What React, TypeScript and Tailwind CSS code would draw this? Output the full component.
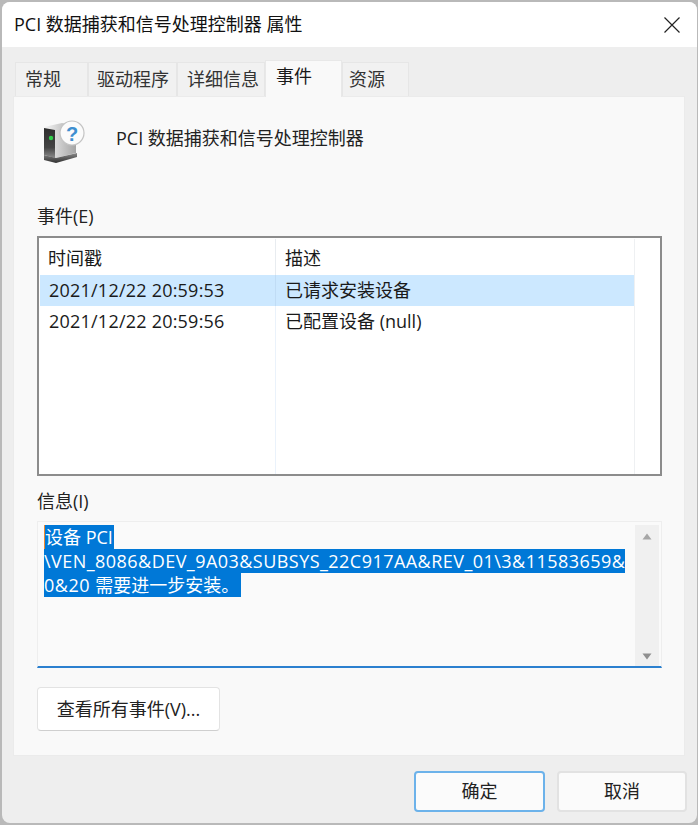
import React from "react";

const FONT = "font-['Open_Sans','Noto_Sans_CJK_SC',sans-serif]";

function DeviceIcon() {
  return (
    <svg width="44" height="48" viewBox="0 0 44 48" className="block">
      <defs>
        <linearGradient id="front" x1="0" y1="0" x2="0" y2="1">
          <stop offset="0" stopColor="#2e2e2e" />
          <stop offset="0.65" stopColor="#444" />
          <stop offset="1" stopColor="#8c8c8c" />
        </linearGradient>
        <linearGradient id="side" x1="0" y1="0" x2="1" y2="0">
          <stop offset="0" stopColor="#f6f6f6" />
          <stop offset="1" stopColor="#a4a4a4" />
        </linearGradient>
        <linearGradient id="base" x1="0" y1="0" x2="0" y2="1">
          <stop offset="0" stopColor="#8a8a8a" />
          <stop offset="1" stopColor="#303030" />
        </linearGradient>
      </defs>
      <path d="M1 7 L19 3 L33 6 L33 33 L13 38 L1 35 Z" fill="url(#side)" />
      <path d="M1 8 L12 10 L12 38 L1 35 Z" fill="url(#front)" />
      <path d="M1 35 L13 38 L34 33 L34 37 L13 43 L1 40 Z" fill="url(#base)" />
      <circle cx="8" cy="18" r="2.2" fill="#2fd04a" />
      <circle cx="29" cy="13" r="12" fill="#fbfbfb" stroke="#c4c4c4" strokeWidth="1.2" />
      <text x="29" y="20.5" textAnchor="middle" fontSize="20" fontWeight="700" fill="#3f8fd0" fontFamily="'Liberation Sans',sans-serif">?</text>
    </svg>
  );
}

function Tab({ label, w, pl, active }: { label: string; w: string; pl: string; active?: boolean }) {
  return active ? (
    <div className={`${w} ${pl} relative z-10 -mb-px h-[37px] bg-[#f9f9f9] border border-b-0 border-[#e8e8e8] pt-[3px] leading-[24px] text-[#1a1a1a]`}>
      {label}
    </div>
  ) : (
    <div className={`${w} ${pl} h-[34px] bg-[#f1f1f1] border border-b-0 border-[#e6e6e6] pt-[4px] leading-[24px] text-[#333]`}>
      {label}
    </div>
  );
}

export default function App() {
  return (
    <div className={`${FONT} h-[825px] w-[698px] overflow-hidden bg-[#b9b9b9] pl-[2px] pt-[2px] pr-[1px] pb-[2px] text-[18px] text-[#1a1a1a]`}>
      <div className="flex h-full flex-col overflow-hidden rounded-[8px] bg-[#eeeeee]">
        <div className="flex h-[45px] shrink-0 items-center justify-between bg-white pl-[12px] pr-[17px]">
          <span className="text-[#111]">PCI 数据捕获和信号处理控制器 属性</span>
          <svg width="16" height="16" viewBox="0 0 16 16">
            <path d="M0.5 0.5 L15.5 15.5 M15.5 0.5 L0.5 15.5" stroke="#222" strokeWidth="1.2" fill="none" />
          </svg>
        </div>

        <div className="flex flex-1 flex-col pl-[11px] pr-[10px] pt-[12px]">
          <div className="flex h-[37px] items-end pl-[2px]">
            <Tab label="常规" w="w-[73px]" pl="pl-[9px]" />
            <Tab label="驱动程序" w="w-[89px]" pl="pl-[8px]" />
            <Tab label="详细信息" w="w-[88px]" pl="pl-[9px]" />
            <Tab label="事件" w="w-[77px]" pl="pl-[10px]" active />
            <Tab label="资源" w="w-[67px]" pl="pl-[6px]" />
          </div>

          <div className="mr-[2px] flex h-[660px] flex-col border border-[#ebebeb] bg-[#f9f9f9] pl-[23px] pr-[22px]">
            <div className="flex h-[71px] items-start pl-[6px] pt-[23px]">
              <DeviceIcon />
              <span className="ml-[29px] mt-[6px] leading-[24px] text-[#222]">PCI 数据捕获和信号处理控制器</span>
            </div>

            <div className="mt-[36px] h-[24px] leading-[24px] text-[#222]">事件(E)</div>

            <div className="mt-[8px] h-[240px] border-2 border-[#8c8c8c] bg-white pl-px pt-px pr-[25px]">
              <div className="relative flex h-full flex-col border-r border-[#eef0f2]">
                <div className="flex h-[36px] items-center">
                  <div className="flex h-full w-[236px] items-center border-r border-[#e8ecf0] pl-[8px] pt-[2px]">时间戳</div>
                  <div className="pl-[9px] pt-[2px]">描述</div>
                </div>
                <div className="flex h-[31px] items-center bg-[#cce8ff]">
                  <div className="flex h-full w-[236px] items-center border-r border-[#c0dcf5] pl-[9px] tracking-[0.22px]">2021/12/22 20:59:53</div>
                  <div className="pl-[9px]">已请求安装设备</div>
                </div>
                <div className="flex flex-1">
                  <div className="h-full w-[236px] border-r border-[#eaf2fb] pl-[9px] pt-[3px] leading-[25px] tracking-[0.22px]">2021/12/22 20:59:56</div>
                  <div className="pl-[9px] pt-[3px] leading-[25px]">已配置设备 (null)</div>
                </div>
              </div>
            </div>

            <div className="mt-[13px] h-[24px] leading-[24px] text-[#222]">信息(I)</div>

            <div className="mt-[8px] flex h-[147px] border border-b-2 border-[#eeeeee] border-b-[#2b80cf] bg-[#fafafa] pl-[6px] pr-[2px] pt-[3px]">
              <div className="flex-1 leading-[24px] text-white">
                <div className="w-fit border-l border-l-[#f08a30] bg-[#0078d7] pr-px">设备 PCI</div>
                <div className="w-[581px] whitespace-nowrap bg-[#0078d7] tracking-[0.46px]">\VEN_8086&amp;DEV_9A03&amp;SUBSYS_22C917AA&amp;REV_01\3&amp;11583659&amp;</div>
                <div className="w-[197px] whitespace-nowrap bg-[#0078d7]"><span className="tracking-[0.5px]">0&amp;20 </span>需要进一步安装。</div>
              </div>
              <div className="flex h-[141px] w-[24px] flex-col items-center justify-between bg-[#f0f0f0] pb-[6px] pt-[8px]">
                <svg width="10" height="7" viewBox="0 0 10 7"><path d="M5 0.5 L9.5 6.5 L0.5 6.5 Z" fill="#a6a6a6" /></svg>
                <svg width="10" height="7" viewBox="0 0 10 7"><path d="M0.5 0.5 L9.5 0.5 L5 6.5 Z" fill="#8f8f8f" /></svg>
              </div>
            </div>

            <button className="mt-[19px] h-[44px] w-[183px] rounded-[4px] border border-[#e3e3e3] border-b-[#cfcfcf] bg-white text-[#222]">
              查看所有事件(V)...
            </button>
          </div>

          <div className="flex justify-end gap-[12px] pt-[15px]">
            <button className="h-[41px] w-[131px] rounded-[4px] border-2 border-[#6cb2ea] bg-[#fbfbfb] text-[#222]">确定</button>
            <button className="h-[41px] w-[130px] rounded-[4px] border-2 border-[#e2e2e2] bg-[#fbfbfb] text-[#222]">取消</button>
          </div>
        </div>
      </div>
    </div>
  );
}
